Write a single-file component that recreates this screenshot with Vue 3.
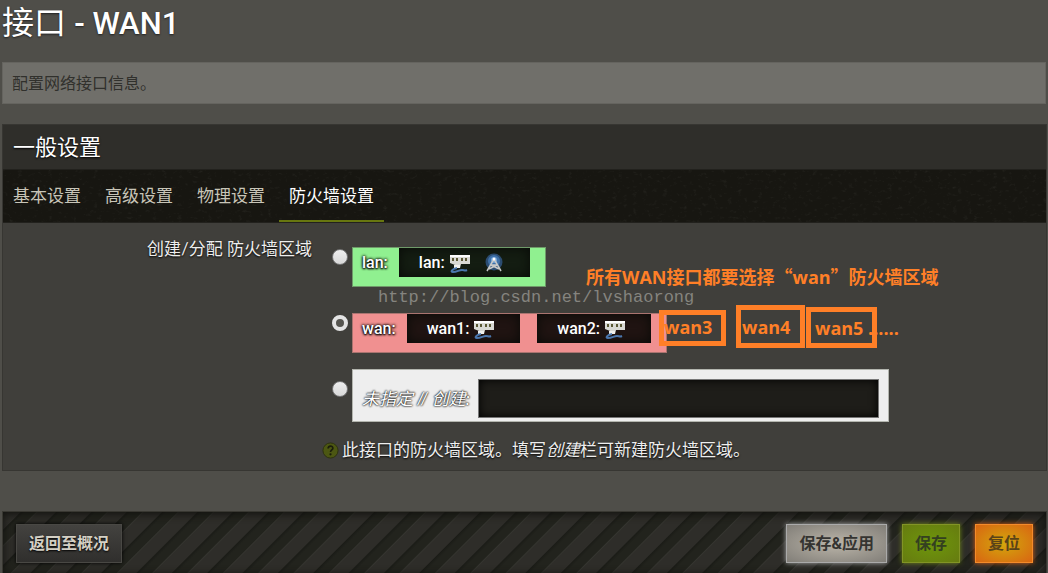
<script setup>
import { ref } from 'vue'

const tabs = ['基本设置', '高级设置', '物理设置', '防火墙设置']
const active = ref(3)
const zone = ref('wan')
const newZone = ref('')
const zones = [
  { name: 'lan', ifaces: [{ name: 'lan', wifi: true }] },
  { name: 'wan', ifaces: [{ name: 'wan1' }, { name: 'wan2' }] },
]
</script>

<template>
  <main class="page">
    <h1>接口 <span>- WAN1</span></h1>
    <p class="intro">配置网络接口信息。</p>

    <section class="panel">
      <h2>一般设置</h2>
      <nav class="tabs">
        <svg class="grain" aria-hidden="true">
          <filter id="grain">
            <feTurbulence type="fractalNoise" baseFrequency="0.2 0.3" numOctaves="3" seed="4" />
            <feColorMatrix values="0 0 0 0 .6  0 0 0 0 .6  0 0 0 0 .55  1.2 0 0 0 -.68" />
          </filter>
          <rect width="100%" height="100%" filter="url(#grain)" />
        </svg>
        <a
          v-for="(tab, i) in tabs"
          :key="tab"
          href="#"
          :class="{ active: i === active }"
          @click.prevent="active = i"
        >{{ tab }}</a>
      </nav>

      <div class="row">
        <span id="zone-label" class="label">创建/分配 防火墙区域</span>
        <div class="field" role="radiogroup" aria-labelledby="zone-label">
          <div v-for="z in zones" :key="z.name" class="option">
            <input :id="'zone-' + z.name" v-model="zone" type="radio" name="zone" :value="z.name" />
            <label :for="'zone-' + z.name" class="zone" :class="z.name">
              <strong>{{ z.name }}:</strong>
              <span v-for="f in z.ifaces" :key="f.name" class="iface">
                {{ f.name }}:
                <svg class="icon" viewBox="0 0 22 20" aria-hidden="true">
                  <path d="M1 2h20v9h-9l-1 4H6v-3L1 10z" fill="#d9d9d4" />
                  <path d="M1 3h20" stroke="#fff" stroke-width="2" />
                  <path d="M4 5v3M8 5v3M13 5v3M17 5v3" stroke="#5a5834" stroke-width="2" />
                  <path d="M5 12h6v3H5z" fill="#f0f0ed" />
                  <path d="M8 15C3 16 1 19 4 19c4 0 6-2 9-2 2 0 3 1 5 0" fill="none" stroke="#4a76ad" stroke-width="2" />
                </svg>
                <svg v-if="f.wifi" class="icon wifi" viewBox="0 0 22 20" aria-hidden="true">
                  <circle cx="11" cy="9" r="8.500" fill="#2b4c70" />
                  <circle cx="11" cy="8" r="6" fill="#3f71a8" />
                  <circle cx="11" cy="7" r="3" fill="#77a8d9" />
                  <path d="M11 6 4 18M11 6l7 12M8 12l8 4M14 12l-8 4M8 12h6" fill="none" stroke="#c6c8c8" stroke-width="1.500" />
                  <circle cx="11" cy="6" r="1.500" fill="#fff" />
                </svg>
              </span>
            </label>
          </div>
          <div class="option">
            <input id="zone-new" v-model="zone" type="radio" name="zone" value="new" aria-label="未指定 // 创建" />
            <div class="zone create">
              <label for="new-name"><em>未指定 // 创建:</em></label>
              <input id="new-name" v-model="newZone" type="text" />
            </div>
          </div>
          <p class="help">
            <svg viewBox="0 0 18 18" aria-hidden="true">
              <circle cx="9" cy="9" r="8" fill="#4c5712" stroke="#2d320f" />
              <path d="M6.500 7c0-3.500 5-3.300 5-.5 0 1.800-2.500 2-2.500 4.200" fill="none" stroke="#1b1d0c" stroke-width="1.800" />
              <circle cx="9" cy="13" r="1.200" fill="#1b1d0c" />
            </svg>
            <span>此接口的防火墙区域。填写<em>创建</em>栏可新建防火墙区域。</span>
          </p>
        </div>
      </div>
    </section>

    <footer class="actions">
      <button type="button" class="back">返回至概况</button>
      <span class="spacer"></span>
      <button type="button" class="apply">保存&amp;应用</button>
      <button type="button" class="save">保存</button>
      <button type="button" class="reset">复位</button>
    </footer>

    <span class="watermark">http://blog.csdn.net/lvshaorong</span>
    <span class="note tip">所有WAN接口都要选择<span class="q">“</span>wan<span class="q">”</span>防火墙区域</span>
    <span class="note box wan3">wan3</span>
    <span class="note box wan4">wan4</span>
    <span class="note box wan5">wan5</span>
    <span class="note dots">......</span>
  </main>
</template>

<style>
body {
  background: #4f4e49;
}
</style>

<style scoped>
* {
  box-sizing: border-box;
}
.page {
  position: relative;
  padding: 0 1px 0 2px;
  overflow: hidden;
  color: #eee;
  font: 17px/24px Lato, "Noto Sans CJK SC", sans-serif;
}
h1 {
  margin: 0 0 18px;
  color: #fff;
  font-size: 32px;
  font-weight: 400;
  line-height: 44px;
  text-shadow: 0 1px 2px #222;
}
h1 span {
  font-family: Roboto, sans-serif;
  font-size: 31px;
  font-weight: 500;
  line-height: 32px;
}
.intro {
  margin: 0 1px 20px 0;
  padding: 8px 9px;
  border: 1px solid #65645f;
  background: #706f6a;
  color: #30302c;
  font-size: 16px;
}
.panel {
  border: 1px solid #373632;
  background: #403f3b;
}
h2 {
  margin: 0;
  padding: 0 10px;
  background: #2f2e2a;
  color: #fff;
  font-size: 22px;
  font-weight: 400;
  line-height: 44px;
  text-shadow: 0 1px 2px #000;
}
.tabs {
  position: relative;
  display: flex;
  gap: 4px;
  border-top: 1px solid #22211d;
  border-bottom: 1px solid #22211d;
  background: #171611;
}
.grain {
  position: absolute;
  inset: 0;
  width: 100%;
  height: 100%;
  opacity: 0.15;
}
.tabs a {
  position: relative;
  padding: 1px 10px 0;
  border-bottom: 2px solid transparent;
  color: #c8c5b8;
  line-height: 49px;
  text-decoration: none;
}
.tabs a.active {
  border-color: #67760f;
  color: #fff;
}
.row {
  display: flex;
  gap: 10px;
  padding: 14px 0 8px;
}
.label {
  width: 309px;
  flex: none;
  text-align: right;
  text-shadow: 0 1px 2px #000;
}
.field {
  flex: 1;
  padding-top: 10px;
}
.option {
  display: flex;
  align-items: flex-start;
  gap: 4px;
  margin: 0 0 26px 10px;
}
.option:nth-child(2),
.option:nth-child(3) {
  margin-bottom: 16px;
}
input[type="radio"] {
  appearance: none;
  flex: none;
  width: 16px;
  height: 16px;
  margin: 2px 0 0;
  border: 1px solid #777;
  border-radius: 50%;
  background: linear-gradient(#eee, #d8d8d8);
}
input[type="radio"]:checked {
  border: 4px solid #e4e4e4;
  background: #55544f;
}
.option:nth-child(3) input[type="radio"] {
  margin-top: 12px;
}
.zone {
  display: flex;
  align-items: flex-start;
  height: 40px;
  padding-left: 9px;
  border: 1px solid #6f9a69;
  color: #fff;
}
.zone strong {
  padding-right: 11px;
  font-family: Roboto, sans-serif;
  font-size: 16px;
  line-height: 29px;
  font-weight: 500;
  text-shadow: 0 0 3px #000, 0 0 3px #000, 0 1px 2px #000;
}
.lan {
  padding-right: 15px;
  background: #90f090;
}
.wan {
  padding-right: 15px;
  border-color: #aa7470;
  background: #f09090;
}
.iface {
  display: flex;
  align-items: center;
  gap: 4px;
  height: 29px;
  padding: 0 25px 0 20px;
  background: #141d12;
  box-shadow: inset 0 0 12px #080a07;
  font-family: Roboto, sans-serif;
  font-size: 16px;
  font-weight: 500;
}
.wan .iface {
  background: #201412;
}
.iface + .iface {
  margin-left: 17px;
}
.icon {
  width: 22px;
  height: 20px;
}
.wifi {
  margin-left: 8px;
}
.create {
  width: 537px;
  height: 53px;
  padding: 9px 9px 0;
  border-color: #b3b5ae;
  background: #eee;
}
.create label {
  flex: none;
  padding-right: 8px;
  line-height: 39px;
  text-shadow: 0 0 2px #000, 0 0 2px #000;
}
.create input {
  flex: 1;
  min-width: 0;
  height: 39px;
  padding: 0 10px;
  border: 1px solid #777;
  outline: 0;
  background: #1e1d19;
  box-shadow: inset 0 0 10px #000;
  color: #eee;
  font: inherit;
}
.help {
  display: flex;
  align-items: center;
  gap: 3px;
  margin: 0;
  text-shadow: 0 1px 2px #000;
}
.help svg {
  width: 17px;
  height: 17px;
}
.actions {
  display: flex;
  gap: 15px;
  margin-top: 40px;
  padding: 12px 13px 10px;
  border: 1px solid #393832;
  border-bottom: 0;
  background: repeating-linear-gradient(135deg, #2e2d29 0 12px, #1b1c17 13px, #22231d 16px 23px, #34342f 24px, #2e2d29 25px);
  box-shadow: inset 0 2px 8px #11110e;
}
.spacer {
  flex: 1;
}
button {
  height: 39px;
  padding: 0 12px;
  border: 1px solid #494844;
  font: 700 16px/24px Roboto, "Noto Sans CJK SC", sans-serif;
}
.back {
  background: linear-gradient(#43423f, #302f2d);
  box-shadow: 0 0 4px #000;
  color: #d4d0c4;
  text-shadow: 0 1px 2px #000;
}
.apply {
  border-color: #aaa;
  background: radial-gradient(#bbb5a9, #817e78);
  box-shadow: 0 0 5px #aaa;
  color: #353431;
}
.save {
  border-color: #829426;
  background: radial-gradient(#6e970b, #667b10);
  box-shadow: 0 0 5px #718815;
  color: #344020;
}
.reset {
  border-color: #f38b2b;
  background: radial-gradient(#d2a70c, #d96512);
  box-shadow: 0 0 5px #d75e12;
  color: #5a4318;
}
.watermark {
  position: absolute;
  top: 286px;
  left: 378px;
  color: #85847f;
  font: 17px/24px "Liberation Mono", monospace;
  pointer-events: none;
}
.note {
  position: absolute;
  color: #ff7f27;
  font: 700 18px/24px "Open Sans", "Noto Sans CJK SC", sans-serif;
  white-space: nowrap;
  pointer-events: none;
}
.q {
  font-family: "Noto Sans CJK SC", sans-serif;
}
.tip {
  top: 264px;
  left: 586px;
}
.box {
  border: 5px solid #ff7f27;
}
.wan3 {
  top: 310px;
  left: 659px;
  width: 67px;
  height: 36px;
}
.wan4 {
  top: 305px;
  left: 736px;
  width: 69px;
  height: 43px;
  padding: 5px 1px;
}
.wan5 {
  top: 307px;
  left: 806px;
  width: 71px;
  height: 41px;
  padding: 4px;
}
.dots {
  top: 316px;
  left: 868px;
}
</style>
